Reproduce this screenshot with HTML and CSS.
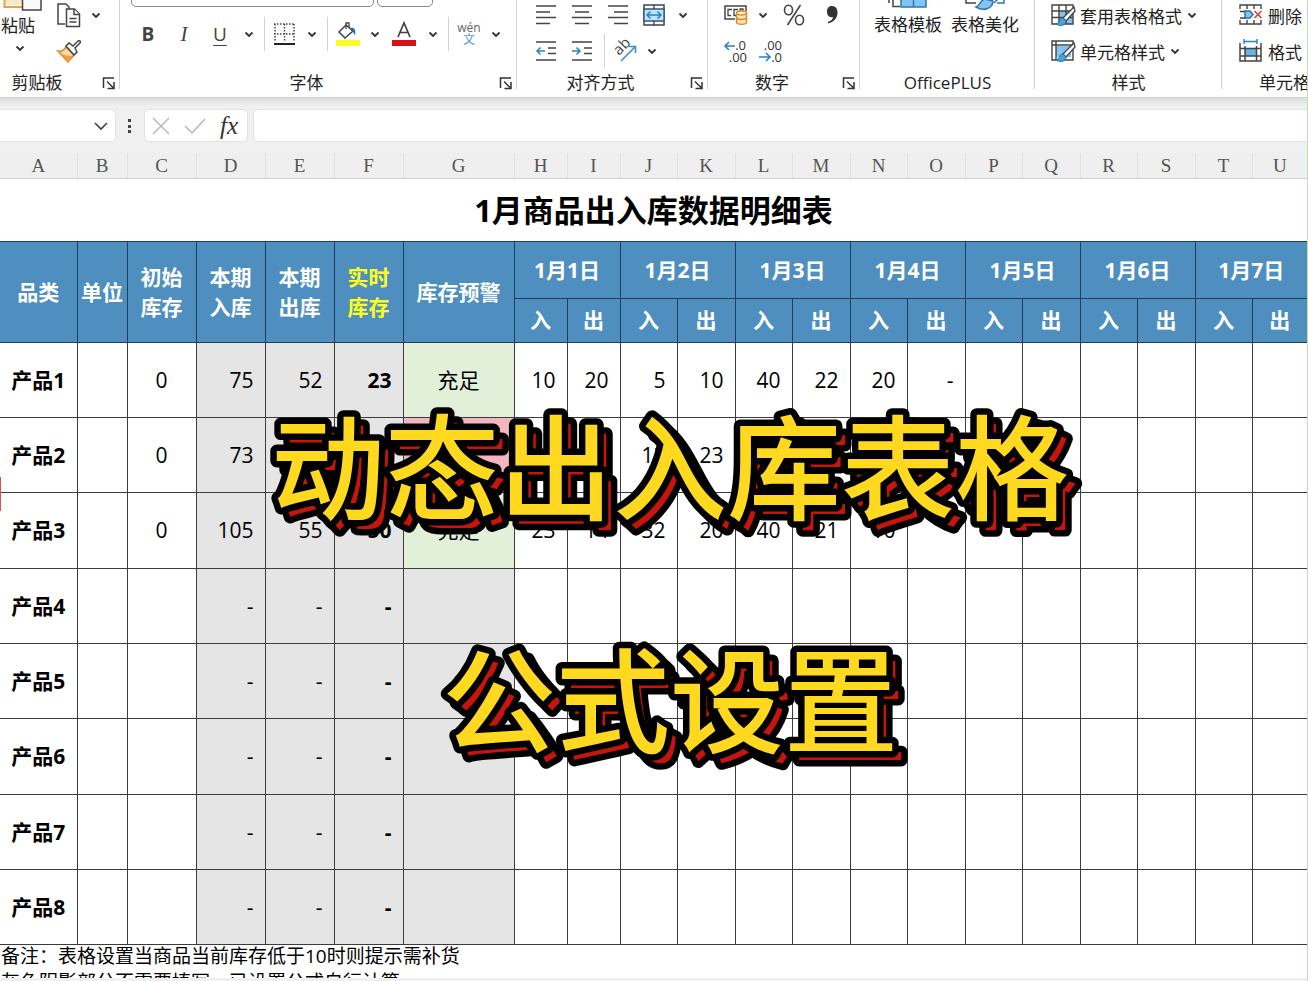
FILE: index.html
```
<!DOCTYPE html>
<html lang="zh-CN">
<head>
<meta charset="utf-8">
<title>1月商品出入库数据明细表</title>
<link rel="stylesheet" href="styles.css">
</head>
<body>
<svg class="defs" aria-hidden="true">
  <symbol id="chev" viewBox="0 0 14 14"><path d="M3.5 5.5 7 9l3.500-3.500" fill="none" stroke="#333" stroke-width="1.800"/></symbol>
  <symbol id="launch" viewBox="0 0 14 14"><path d="M1.500 12V2H12M5 5.500 11 11.500M12 6v6.500H5.500" fill="none" stroke="#333" stroke-width="1.500"/></symbol>
</svg>

<header class="ribbon">
  <section class="group clipboard">
    <div class="body">
      <button class="big paste"><svg width="42" height="11" viewBox="0 0 42 11"><path d="M5 0h16v5H5z" fill="#fbe9cf"/><path d="M3.500 0V7H21" fill="none" stroke="#e8a33d" stroke-width="2"/><path d="M21.500-1V10H40V-1" fill="#fafafa" stroke="#444" stroke-width="1.500"/></svg><span>粘贴</span><svg class="chev"><use href="#chev"/></svg></button>
      <div class="rows">
        <div class="row">
          <button class="ico w24" aria-label="复制"><svg width="24" height="26" viewBox="0 0 24 26"><g fill="#fff" stroke="#444" stroke-width="1.500"><path d="M8 22H1V2h8l3 3v3"/><path d="M9.500 7h8l5 5v12.500h-13z"/><path d="M17 7v5.500h5.500M12.500 16.500h7M12.500 20h7"/></g></svg></button>
          <button class="drop" aria-label="复制选项"><svg class="chev"><use href="#chev"/></svg></button>
        </div>
        <div class="row tall">
          <button class="ico w24" aria-label="格式刷"><svg width="24" height="24" viewBox="0 0 24 24"><path d="M1 12c4 1 6-1 8-4l8 8c-2 3-4 4-6 7z" fill="#fbd9a5" stroke="#e08a1e" stroke-width="1.500"/><path d="M4 15c4 1 8 2 11 2l-4 6z" fill="#f0a040"/><path d="M9 7l3-3 4 3 5-5c2-1 3 1 2 2l-5 5 2 4-3 3z" fill="#fff" stroke="#444" stroke-width="1.500"/></svg></button>
        </div>
      </div>
    </div>
    <div class="foot"><span>剪贴板</span><button aria-label="剪贴板设置"><svg width="14" height="14"><use href="#launch"/></svg></button></div>
  </section>

  <section class="group font">
    <div class="body column">
      <div class="combos"><select class="family" aria-label="字体名称"></select><select class="size" aria-label="字号"></select></div>
      <div class="row mid">
        <button class="ico b" aria-label="加粗">B</button>
        <button class="ico i" aria-label="倾斜">I</button>
        <button class="ico u" aria-label="下划线">U</button>
        <button class="drop" aria-label="下划线选项"><svg class="chev"><use href="#chev"/></svg></button>
        <i class="sep"></i>
        <button class="ico w24" aria-label="边框"><svg width="24" height="24" viewBox="0 0 24 24"><path d="M1 2h21M1 12h21M2 2v18M11.500 2v18M21 2v18" fill="none" stroke="#444" stroke-width="1.500" stroke-dasharray="1.500 1.500"/><path d="M1 22h21" stroke="#222" stroke-width="2"/></svg></button>
        <button class="drop" aria-label="边框选项"><svg class="chev"><use href="#chev"/></svg></button>
        <i class="sep"></i>
        <button class="ico w24" aria-label="填充颜色"><svg width="24" height="24" viewBox="0 0 24 24"><path d="M3 10 10 3l7 6-8 7z" fill="#fff" stroke="#444" stroke-width="1.500"/><path d="M10 7V1h3v5" fill="none" stroke="#444" stroke-width="1.300"/><path d="M15 6c4-1 5 3 4 8-1-3-2-5-4-5z" fill="#2b6ca3"/><path d="M0 18h24v6H0z" fill="#fbfb28"/></svg></button>
        <button class="drop" aria-label="填充颜色选项"><svg class="chev"><use href="#chev"/></svg></button>
        <button class="ico" aria-label="字体颜色"><svg width="24" height="24" viewBox="0 0 24 24"><path d="M6 15 12 1l6 14M8 10.500h8" fill="none" stroke="#444" stroke-width="1.700"/><path d="M0 18h24v6H0z" fill="#d8121a"/></svg></button>
        <button class="drop" aria-label="字体颜色选项"><svg class="chev"><use href="#chev"/></svg></button>
        <i class="sep"></i>
        <button class="ico w24 phonetic"><span>wén</span><span class="wen">文</span></button>
        <button class="drop" aria-label="拼音选项"><svg class="chev"><use href="#chev"/></svg></button>
      </div>
    </div>
    <div class="foot"><span>字体</span><button aria-label="字体设置"><svg width="14" height="14"><use href="#launch"/></svg></button></div>
  </section>

  <section class="group align">
    <div class="body column">
      <div class="row">
        <button class="ico" aria-label="左对齐"><svg width="20" height="20" viewBox="0 0 20 20"><path d="M0 1h20M0 7h14M0 12.500h20M0 18.500h14" stroke="#444" stroke-width="1.500"/></svg></button>
        <button class="ico" aria-label="居中"><svg width="20" height="20" viewBox="0 0 20 20"><path d="M0 1h20M3 7h14M0 12.500h20M3 18.500h14" stroke="#444" stroke-width="1.500"/></svg></button>
        <button class="ico" aria-label="右对齐"><svg width="20" height="20" viewBox="0 0 20 20"><path d="M0 1h20M6 7h14M0 12.500h20M6 18.500h14" stroke="#444" stroke-width="1.500"/></svg></button>
        <button class="ico" aria-label="合并后居中"><svg width="22" height="22" viewBox="0 0 22 22"><path d="M1 1h20v20H1z" fill="#fff" stroke="#345" stroke-width="1.500"/><path d="M1 5h20v12H1z" fill="#bfe3f8" stroke="#357" stroke-width="1.300"/><path d="M11 1v4M11 17v4" stroke="#345" stroke-width="1.300"/><path d="M4 11h14M7.500 7.500 4 11l3.500 3.500M14.500 7.500 18 11l-3.500 3.500" fill="none" stroke="#2a83c0" stroke-width="1.500"/></svg></button>
        <button class="drop" aria-label="合并选项"><svg class="chev"><use href="#chev"/></svg></button>
      </div>
      <div class="row tall">
        <button class="ico" aria-label="减少缩进"><svg width="20" height="20" viewBox="0 0 20 20"><path d="M0 1h20M12 7h8M12 12.500h8M0 19h20" stroke="#444" stroke-width="1.500"/><path d="M9 10H1M4.500 6.500 1 10l3.500 3.500" fill="none" stroke="#2a83c0" stroke-width="1.500"/></svg></button>
        <button class="ico" aria-label="增加缩进"><svg width="20" height="20" viewBox="0 0 20 20"><path d="M0 1h20M12 7h8M12 12.500h8M0 19h20" stroke="#444" stroke-width="1.500"/><path d="M0 10h8M4.500 6.500 8 10l-3.500 3.500" fill="none" stroke="#2a83c0" stroke-width="1.500"/></svg></button>
        <i class="sep"></i>
        <button class="ico w24" aria-label="方向"><svg width="24" height="24" viewBox="0 0 24 24"><text x="6" y="17" transform="rotate(-45 6 17)" font-family="Open Sans" font-size="15" fill="#444">ab</text><path d="M8 22 22 8M16 7.500h6.500V14" fill="none" stroke="#3a8fc8" stroke-width="1.600"/></svg></button>
        <button class="drop" aria-label="方向选项"><svg class="chev"><use href="#chev"/></svg></button>
      </div>
    </div>
    <div class="foot"><span>对齐方式</span><button aria-label="对齐设置"><svg width="14" height="14"><use href="#launch"/></svg></button></div>
  </section>

  <section class="group number">
    <div class="body column">
      <div class="row">
        <button class="ico w24" aria-label="会计数字格式"><svg width="24" height="22" viewBox="0 0 24 22"><path d="M11 15H1V2h21v5" fill="none" stroke="#444" stroke-width="1.500"/><path d="M8 5.500H4v6h3M14 5.500H10v6h2M19 7V5h-3v2" fill="none" stroke="#444" stroke-width="1.300"/><path d="M12.500 9v9c0 3 10 3 10 0V9" fill="#fde6c0" stroke="#e08a1e" stroke-width="1.500"/><ellipse cx="17.500" cy="9" rx="5" ry="2" fill="#fff3df" stroke="#e08a1e" stroke-width="1.500"/><path d="M12.500 13.500c0 2.500 10 2.500 10 0" fill="none" stroke="#e08a1e" stroke-width="1.500"/></svg></button>
        <button class="drop" aria-label="会计格式选项"><svg class="chev"><use href="#chev"/></svg></button>
        <button class="ico percent" aria-label="百分比样式"><svg width="22" height="22" viewBox="0 0 22 22"><g fill="none" stroke="#444" stroke-width="1.600"><ellipse cx="5.500" cy="6" rx="4" ry="4.800"/><ellipse cx="16.500" cy="16" rx="4" ry="4.800"/><path d="M17.500 1 4.500 21"/></g></svg></button>
        <button class="ico" aria-label="千位分隔样式"><svg width="12" height="20" viewBox="0 0 12 20"><path d="M6 1c4 0 5.500 3 5.500 6.500C11.500 13 8 17 2 18.500v-1.500c3-1 5-3 5-5C3 13 1 10 1 6.500 1 3 3 1 6 1z" fill="#333"/></svg></button>
      </div>
      <div class="row tall">
        <button class="ico w24" aria-label="增加小数位数"><svg width="24" height="24" viewBox="0 0 24 24"><g font-family="Open Sans" font-size="13" fill="#333"><text x="22" y="11" text-anchor="end">.0</text><text x="23" y="23" text-anchor="end">.00</text></g><path d="M11 7H1M5 3 1 7l4 4" fill="none" stroke="#2a83c0" stroke-width="1.600"/></svg></button>
        <button class="ico" aria-label="减少小数位数"><svg width="24" height="24" viewBox="0 0 24 24"><g font-family="Open Sans" font-size="13" fill="#333"><text x="24" y="11" text-anchor="end">.00</text><text x="24" y="23" text-anchor="end">.0</text></g><path d="M1 18h11M8 14l4 4-4 4" fill="none" stroke="#2a83c0" stroke-width="1.600"/></svg></button>
      </div>
    </div>
    <div class="foot"><span>数字</span><button aria-label="数字设置"><svg width="14" height="14"><use href="#launch"/></svg></button></div>
  </section>

  <section class="group plus">
    <div class="body">
      <button class="big"><svg width="42" height="10" viewBox="0 0 42 10"><path d="M2 0v3M6 0v6.500h7" fill="none" stroke="#445" stroke-width="1.500"/><path d="M14-1h25v8H14z" fill="#84c4f0" stroke="#2a78b0" stroke-width="1.500"/><path d="M26.500-1v8" stroke="#2a78b0" stroke-width="1.500"/></svg><span>表格模板</span></button>
      <button class="big"><svg width="42" height="10" viewBox="0 0 42 10"><path d="M2 0v3h10" fill="none" stroke="#445" stroke-width="1.500"/><path d="M12 7c4-1 4-7 9-8l8 2c0 7-9 11-17 6z" fill="#84c4f0" stroke="#2a78b0" stroke-width="1.500"/><path d="M30 3l4-4M33 3h7V-1" fill="none" stroke="#2a78b0" stroke-width="1.500"/></svg><span>表格美化</span></button>
    </div>
    <div class="foot"><span>OfficePLUS</span></div>
  </section>

  <section class="group styles">
    <div class="body column">
      <div class="row"><button class="text"><svg width="24" height="22" viewBox="0 0 24 22"><path d="M8 7h14v13H8z" fill="#84c4f0"/><path d="M1 1h21v19H1zM1 7h21M1 13.500h21M8 1v19M15 1v19" fill="none" stroke="#444" stroke-width="1.400"/><path d="M23 3 12 14l3 3 9-10z" fill="#fff" stroke="#444" stroke-width="1.300"/><path d="M12 14c-4 0-3 5-7 6 5 3 10 1 10-3z" fill="#4aa0dc" stroke="#2a6ca0"/></svg><span>套用表格格式</span><svg class="chev"><use href="#chev"/></svg></button></div>
      <div class="row tall"><button class="text"><svg width="24" height="22" viewBox="0 0 24 22"><path d="M5 6h15v11H5z" fill="#84c4f0"/><path d="M1 1h21v19H1zM1 5h21M5 1v19" fill="none" stroke="#444" stroke-width="1.400"/><path d="M23 3 12 14l3 3 9-10z" fill="#fff" stroke="#444" stroke-width="1.300"/><path d="M12 14c-4 0-3 5-7 6 5 3 10 1 10-3z" fill="#4aa0dc" stroke="#2a6ca0"/></svg><span>单元格样式</span><svg class="chev"><use href="#chev"/></svg></button></div>
    </div>
    <div class="foot"><span>样式</span></div>
  </section>

  <section class="group cells">
    <div class="body column">
      <div class="row"><button class="text"><svg width="24" height="22" viewBox="0 0 24 22"><path d="M1 5V1h21v4M1 16v4h21v-4M8 1v4M15 1v4M8 16v4M15 16v4M1 7.500h6M1 14h6" fill="none" stroke="#444" stroke-width="1.400"/><path d="M6 7h5l3 3.500-3 3.500H6z" fill="#84c4f0" stroke="#2a6ca0" stroke-width="1.400"/><path d="M15.500 7l7 7M22.500 7l-7 7" stroke="#e0403a" stroke-width="1.600"/></svg><span>删除</span></button></div>
      <div class="row tall"><button class="text"><svg width="24" height="24" viewBox="0 0 24 24"><path d="M6 10h12v7H6z" fill="#64b4ea"/><path d="M5 0v5M18 0v5M5 2.500h13" fill="none" stroke="#2a83c0" stroke-width="1.400"/><path d="M1 4v18h21V4M1 9.500h21M1 17h21M6 7v15M17.500 7v15" fill="none" stroke="#444" stroke-width="1.500"/></svg><span>格式</span></button></div>
    </div>
    <div class="foot"><span>单元格</span></div>
  </section>
</header>

<div class="formula-bar">
  <div class="box name"><input aria-label="名称框"><button aria-label="名称列表"><svg width="14" height="10" viewBox="0 0 14 10"><path d="M1 2l6 6 6-6" fill="none" stroke="#444" stroke-width="1.700"/></svg></button></div>
  <svg class="dots" width="4" height="16" viewBox="0 0 4 16"><path d="M0 1h3v3H0zM0 7h3v3H0zM0 12h3v3H0z" fill="#444"/></svg>
  <div class="box tools">
    <button aria-label="取消"><svg width="18" height="18" viewBox="0 0 18 18"><path d="M1 1l16 16M17 1 1 17" stroke="#b5b5b5" stroke-width="1.400"/></svg></button>
    <button aria-label="输入"><svg width="22" height="18" viewBox="0 0 22 18"><path d="M1 9l7 7L21 2" fill="none" stroke="#b5b5b5" stroke-width="1.500"/></svg></button>
    <button class="fx" aria-label="插入函数">fx</button>
  </div>
  <input class="box formula" aria-label="编辑栏">
</div>

<main class="sheet">
  <table>
    <colgroup><col class="ca"><col class="cb"><col class="cc"><col class="cc"><col class="cc"><col class="cc"><col class="cg"><col class="ch"><col class="ch"><col class="cd"><col class="cd"><col class="cd"><col class="cd"><col class="cd"><col class="cd"><col class="cd"><col class="cd"><col class="cd"><col class="cd"><col class="cd"><col></colgroup>
    <thead>
      <tr class="letters"><th>A</th><th>B</th><th>C</th><th>D</th><th>E</th><th>F</th><th>G</th><th>H</th><th>I</th><th>J</th><th>K</th><th>L</th><th>M</th><th>N</th><th>O</th><th>P</th><th>Q</th><th>R</th><th>S</th><th>T</th><th>U</th></tr>
      <tr class="title"><th colspan="21">1月商品出入库数据明细表</th></tr>
      <tr class="head days"><th rowspan="2">品类</th><th rowspan="2">单位</th><th rowspan="2">初始<br>库存</th><th rowspan="2">本期<br>入库</th><th rowspan="2">本期<br>出库</th><th rowspan="2" class="live">实时<br>库存</th><th rowspan="2">库存预警</th><th colspan="2">1月1日</th><th colspan="2">1月2日</th><th colspan="2">1月3日</th><th colspan="2">1月4日</th><th colspan="2">1月5日</th><th colspan="2">1月6日</th><th colspan="2">1月7日</th></tr>
      <tr class="head inout"><th>入</th><th>出</th><th>入</th><th>出</th><th>入</th><th>出</th><th>入</th><th>出</th><th>入</th><th>出</th><th>入</th><th>出</th><th>入</th><th>出</th></tr>
    </thead>
    <tbody>
      <tr><th>产品1</th><td></td><td>0</td><td>75</td><td>52</td><td>23</td><td class="ok">充足</td><td>10</td><td>20</td><td>5</td><td>10</td><td>40</td><td>22</td><td>20</td><td>-</td><td></td><td></td><td></td><td></td><td></td><td></td></tr>
      <tr><th>产品2</th><td></td><td>0</td><td>73</td><td></td><td></td><td class="low"></td><td></td><td></td><td>12</td><td>23</td><td></td><td></td><td></td><td></td><td></td><td></td><td></td><td></td><td></td><td></td></tr>
      <tr><th>产品3</th><td></td><td>0</td><td>105</td><td>55</td><td>50</td><td class="ok">充足</td><td>23</td><td>14</td><td>32</td><td>20</td><td>40</td><td>21</td><td>10</td><td></td><td></td><td></td><td></td><td></td><td></td><td></td></tr>
      <tr><th>产品4</th><td></td><td></td><td>-</td><td>-</td><td>-</td><td></td><td></td><td></td><td></td><td></td><td></td><td></td><td></td><td></td><td></td><td></td><td></td><td></td><td></td><td></td></tr>
      <tr><th>产品5</th><td></td><td></td><td>-</td><td>-</td><td>-</td><td></td><td></td><td></td><td></td><td></td><td></td><td></td><td></td><td></td><td></td><td></td><td></td><td></td><td></td><td></td></tr>
      <tr><th>产品6</th><td></td><td></td><td>-</td><td>-</td><td>-</td><td></td><td></td><td></td><td></td><td></td><td></td><td></td><td></td><td></td><td></td><td></td><td></td><td></td><td></td><td></td></tr>
      <tr><th>产品7</th><td></td><td></td><td>-</td><td>-</td><td>-</td><td></td><td></td><td></td><td></td><td></td><td></td><td></td><td></td><td></td><td></td><td></td><td></td><td></td><td></td><td></td></tr>
      <tr><th>产品8</th><td></td><td></td><td>-</td><td>-</td><td>-</td><td></td><td></td><td></td><td></td><td></td><td></td><td></td><td></td><td></td><td></td><td></td><td></td><td></td><td></td><td></td></tr>
    </tbody>
  </table>
  <p class="note">备注：表格设置当商品当前库存低于10时则提示需补货</p>
  <p class="note">灰色阴影部分不需要填写，已设置公式自行计算</p>
  <i class="marker"></i>
  <div class="caption">
    <svg width="840" height="400" viewBox="0 0 840 400" role="img">
      <g class="back"><text x="429" y="121">动态出入库表格</text><text x="429" y="354">公式设置</text></g>
      <g class="front"><text x="420" y="112">动态出入库表格</text><text x="420" y="345">公式设置</text></g>
    </svg>
  </div>
</main>
<div class="edge"></div>
</body>
</html>
```
FILE: styles.css
```
* { box-sizing: border-box; }

body {
  margin: 0;
  height: 100vh;
  display: flex;
  flex-direction: column;
  overflow: hidden;
  background: #fff;
  border-right: 1px solid #b4eaa0;
  color: #222;
  font-family: "Open Sans", "Noto Sans CJK SC", sans-serif;
  font-size: 17px;
}

button, input, select { font: inherit; color: inherit; border: 0; margin: 0; padding: 0; background: none; }
svg { display: block; flex: none; overflow: visible; }
.defs { position: absolute; width: 0; height: 0; }

/* Ribbon */
.ribbon {
  display: flex;
  flex: none;
  height: 98px;
  overflow: hidden;
  background: #fff;
  border-bottom: 1px solid #d0d0d0;
}
.group {
  flex: none;
  display: flex;
  flex-direction: column;
  height: 94px;
  position: relative;
}
.group:not(:last-child)::after {
  content: "";
  position: absolute;
  right: 0;
  top: 0;
  height: 89px;
  width: 1px;
  background: #d2d2d2;
}
.clipboard { width: 120px; }
.font { width: 397px; }
.align { width: 191px; }
.number { width: 152px; }
.plus { width: 175px; }
.styles { width: 187px; }
.cells { flex: 1 0 85px; }

.body { display: flex; height: 72px; }
.column { flex-direction: column; }
.row { display: flex; align-items: center; gap: 8px; height: 30px; }
.tall { height: 42px; }
.mid { height: 54px; padding-left: 14px; }
.align .row { padding-left: 15px; }
.number .row { padding-left: 16px; }
.styles .row { padding-left: 16px; }
.cells .row { padding-left: 17px; }
.clipboard .rows { padding-left: 13px; }

.ico { display: flex; align-items: center; justify-content: center; width: 28px; height: 28px; flex: none; color: #444; }
.w24 { width: 24px; }
.percent { width: 32px; }
.drop { width: 14px; height: 28px; display: flex; align-items: center; flex: none; }
.chev { width: 14px; height: 14px; }
.sep { width: 1px; height: 34px; background: #d2d2d2; }
.b { font-weight: 700; font-size: 19px; }
.i { font-family: "Liberation Serif", serif; font-style: italic; font-size: 21px; }
.u { font-size: 19px; text-decoration: underline; text-underline-offset: 4px; }
.phonetic { flex-direction: column; font-size: 12px; line-height: 12px; color: #666; }
.wen { color: #4a9cc8; }

.combos { display: flex; align-items: flex-end; gap: 3px; height: 7px; padding-left: 11px; overflow: hidden; }
.combos select { appearance: none; flex: none; height: 30px; border: 1px solid #8a8a8a; border-radius: 5px; background: #fff; }
.family { width: 243px; }
.size { width: 56px; }

.big { display: flex; flex-direction: column; align-items: center; height: 72px; line-height: 30px; }
.paste { width: 44px; align-items: flex-start; padding-left: 1px; }
.paste .chev { margin: 0 12px; }
.plus .body { padding-left: 14px; gap: 9px; }
.text { display: flex; align-items: center; gap: 5px; white-space: nowrap; }
.text .chev { margin-left: -2px; }

.foot { display: flex; align-items: center; height: 22px; line-height: 22px; }
.foot span { flex: 1; text-align: center; white-space: nowrap; }
.foot button { width: 24px; height: 22px; display: flex; align-items: center; padding-left: 6px; }
.clipboard .foot span { padding-right: 22px; }
.cells .foot span { text-align: left; padding-left: 37px; }

/* Formula bar */
.formula-bar {
  display: flex;
  align-items: center;
  flex: none;
  height: 55px;
  background: linear-gradient(#dedede, #f0f0f0 8px);
}
.box { height: 33px; background: #fff; border: 1px solid #e2e2e2; border-radius: 5px; }
.name { display: flex; align-items: center; width: 116px; border-left: 0; border-radius: 0 5px 5px 0; }
.name input { flex: 1; min-width: 0; height: 28px; padding-left: 6px; }
.name button { width: 21px; height: 28px; display: flex; align-items: center; }
.dots { margin: 0 12px; }
.tools { display: flex; align-items: center; gap: 14px; width: 104px; padding-left: 7px; }
.fx { font-family: "Liberation Serif", serif; font-style: italic; font-size: 25px; line-height: 28px; color: #333; }
.formula { flex: 1; margin-left: 5px; border-right: 0; border-radius: 5px 0 0 5px; padding: 0 8px; }

/* Worksheet */
.sheet { position: relative; flex: 1; min-height: 0; overflow: hidden; color: #000; }
table { width: 100%; border-collapse: collapse; table-layout: fixed; font-size: 21px; line-height: 30px; }
.ca { width: 77px; }
.cb { width: 50px; }
.cc { width: 69px; }
.cg { width: 111px; }
.ch { width: 53px; }
.cd { width: 57px; }
.cd:nth-child(odd) { width: 58px; }
th, td { padding: 0; }
.letters { height: 25px; background: #efefef; }
.letters th {
  font: 19px/22px "Liberation Serif", serif;
  color: #555;
  padding-top: 2px;
  border-right: 1px solid #e2e2e2;
  border-bottom: 1px solid #cfcfcf;
}
.title { height: 63px; font-size: 31px; }
.head { background: #4f8fc0; color: #fff; }
.head th { border: 1px solid #1f3e58; }
.days { height: 57px; }
.inout { height: 44px; }
.head .live { color: #ffff1e; }
tbody tr { height: 75px; }
tbody tr:nth-child(3n) { height: 76px; }
tbody th, tbody td { border: 1px solid #3c3c3c; }
tbody td { text-align: right; padding-right: 11px; }
.letters th:first-child, .title th, .days th:first-child, tbody th:first-child { border-left: 0; }
.letters th:last-child, .title th, .days th:last-child, .inout th:last-child, tbody td:last-child { border-right: 0; }
tbody td:nth-child(3), tbody td:nth-child(7) { text-align: center; padding: 0; }
tbody td:nth-child(n+4):nth-child(-n+7) { background: #e5e5e5; }
tbody td:nth-child(6) { font-weight: 700; }
tbody td.ok:nth-child(7):nth-child(7) { background: #e2efd9; }
tbody td.low:nth-child(7):nth-child(7) { background: #f3b6c0; }
.note { margin: 0; padding-left: 1px; font-size: 19px; line-height: 22px; white-space: nowrap; }
.note + .note { margin-top: 4px; }
.marker { position: absolute; left: 0; top: 324px; width: 1px; height: 34px; background: #e05050; }

/* Video caption over the sheet */
.caption { position: absolute; top: 246px; left: 0; right: 0; display: flex; justify-content: center; padding-left: 32px; pointer-events: none; }
.caption text {
  font-family: "Noto Sans CJK SC", sans-serif;
  font-size: 114px;
  font-weight: 500;
  text-anchor: middle;
  stroke: #000;
  stroke-width: 13px;
  stroke-linejoin: round;
  paint-order: stroke fill;
}
.back text { fill: #c8140f; }
.front text { fill: #ffd91f; }

.edge { flex: none; height: 3px; background: #f0f0f0; }
```
